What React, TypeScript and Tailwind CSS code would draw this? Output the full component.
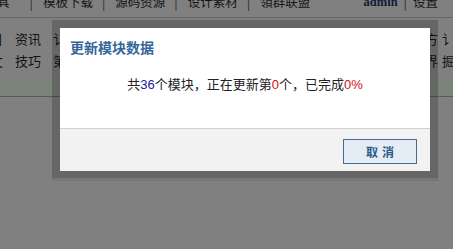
import React from 'react';

const cjk = "font-['SimSun','Noto_Sans_CJK_SC',sans-serif]";

const App: React.FC = () => {
  const navItems = ['模板下载', '源码资源', '设计素材', '領群联盟'];

  return (
    <div className={`relative w-[453px] h-[249px] overflow-hidden bg-[#808080] text-[#141414] ${cjk}`}>
      {/* page behind the overlay */}
      <div className="h-[18px] border-b border-[#666] overflow-hidden">
        <div className="flex items-center justify-between -mt-[6px] h-[16px] text-[12.5px] leading-[16px]">
          <div className="flex items-center">
            <span className="-ml-[3px] mr-[20px]">具</span>
            {navItems.map((item) => (
              <React.Fragment key={item}>
                <span className="text-[#2a2a2a]">|</span>
                <span className="ml-[10px] mr-[9px]">{item}</span>
              </React.Fragment>
            ))}
          </div>
          <div className="flex items-center pr-[15px]">
            <span className="font-bold text-[#0f1a3a] font-['Liberation_Serif',serif]">admin</span>
            <span className="px-[6px] text-[#2a2a2a]">|</span>
            <span>设置</span>
          </div>
        </div>
      </div>
      <div className="flex flex-col gap-[8px] pt-[14px] text-[13px] leading-[14px]">
        <div className="flex justify-between">
          <div className="flex gap-[12px] -ml-[10px]">
            <span>目</span><span>资讯</span><span>讠</span>
          </div>
          <div className="flex gap-[4px] -mr-[2px]">
            <span>方</span><span>讠</span>
          </div>
        </div>
        <div className="flex justify-between">
          <div className="flex gap-[12px] -ml-[10px]">
            <span>文</span><span>技巧</span><span>第</span>
          </div>
          <div className="flex gap-[4px] -mr-[2px]">
            <span>界</span><span>掘</span>
          </div>
        </div>
      </div>
      <div className="mt-[10px] h-[19px] bg-[#7b847b] border-b border-[#5a5a5a]" />

      {/* dialog */}
      <div className="absolute left-[52px] top-[20px] w-[386px] bg-[rgba(0,0,0,0.2)] p-[8px] pb-[7px] shadow-[0_3px_0_rgba(0,0,0,0.08)]">
        <div className="bg-white">
          <div className="h-[36px] flex items-center pl-[10px] pt-[2px] text-[14px] font-bold text-[#336699]">
            更新模块数据
          </div>
          <div className="h-[64px] flex justify-center pt-[10px] text-[13px] text-[#222]">
            <span>
              共<span className="text-[#1a1aa0] font-['Liberation_Sans',sans-serif]">36</span>个模块，正在更新第<span className="text-[#d01010] font-['Liberation_Sans',sans-serif]">0</span>个，已完成<span className="text-[#d01010] font-['Liberation_Sans',sans-serif]">0%</span>
            </span>
          </div>
          <div className="h-[43px] bg-[#f2f2f2] border-t border-[#d0d0d0] flex justify-end items-start pt-[10px] pr-[13px]">
            <button className="w-[74px] h-[25px] border border-[#4a6a8c] bg-[#e4ecf5] text-[12px] font-bold text-[#2b5a8a] tracking-[4px] pl-[4px]">
              取消
            </button>
          </div>
        </div>
      </div>
    </div>
  );
};

export default App;
